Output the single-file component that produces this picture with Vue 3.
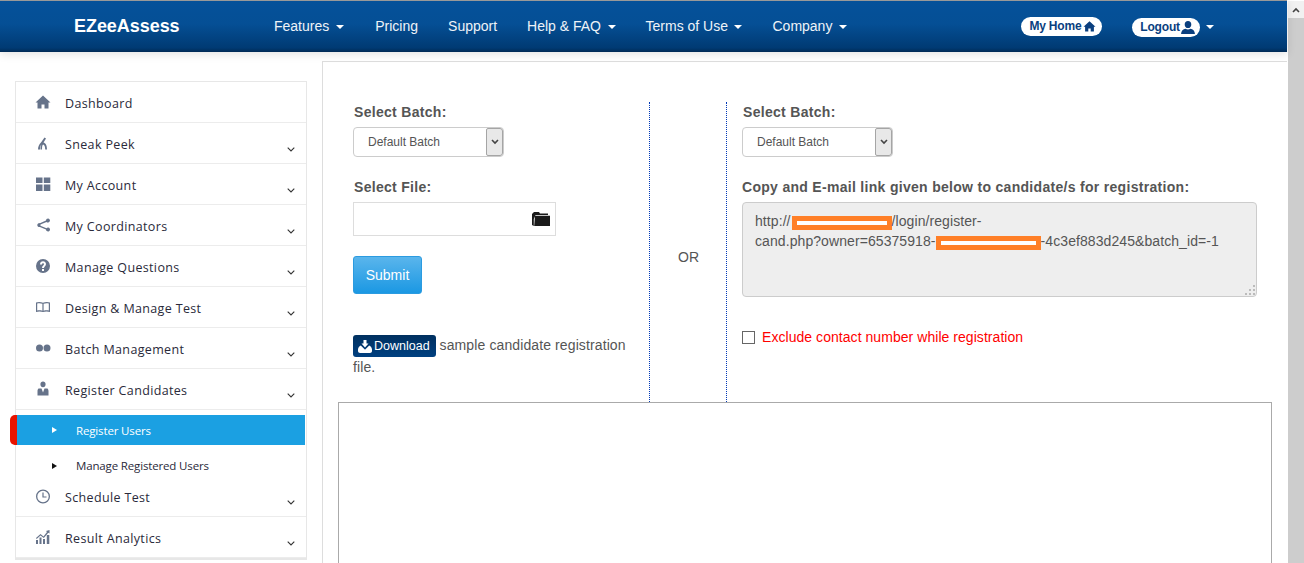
<template>
  <div class="page">
    <div class="main">
      <header class="topbar">
        <a class="brand">EZeeAssess</a>
        <nav class="nav">
          <a v-for="link in navLinks" :key="link.label" class="nav-link">
            {{ link.label }}<span v-if="link.caret" class="caret"></span>
          </a>
        </nav>
        <div class="user-links">
          <a class="pill">
            My Home
            <svg width="13" height="12" viewBox="0 0 16 15"><path :d="icons.home" /></svg>
          </a>
          <a class="pill logout">
            Logout
            <svg width="14" height="13" viewBox="0 0 16 15"><path d="M8 0c2.400 0 3.800 1.700 3.800 3.900S10.400 8.200 8 8.200 4.200 6.100 4.200 3.900 5.600 0 8 0zM0 15c0-3.600 2.400-5.500 5.200-6 .8.500 1.700.8 2.800.8s2-.3 2.800-.8c2.800.5 5.200 2.400 5.200 6z" /></svg>
          </a>
          <span class="caret user-caret"></span>
        </div>
      </header>

      <div class="layout">
        <aside class="sidebar">
          <template v-for="item in menu" :key="item.label">
            <div class="menu-row">
              <svg class="menu-icon" width="16" height="16" viewBox="0 0 16 16"><path fill-rule="evenodd" :d="icons[item.icon]" /></svg>
              <span>{{ item.label }}</span>
              <svg v-if="item.arrow" class="chevron" width="8" height="5" viewBox="0 0 8 5"><path d="M.7.700 4 4l3.300-3.300" /></svg>
            </div>
            <div v-if="item.sub" class="submenu">
              <div
                v-for="sub in item.sub"
                :key="sub.label"
                class="sub-row"
                :class="{ active: sub.active }"
              >
                <span class="tri"></span>{{ sub.label }}
              </div>
            </div>
          </template>
        </aside>

        <section class="panel">
          <div class="forms">
            <div class="col-left">
              <label class="field-label nudge">Select Batch:</label>
              <div class="select-box">
                <span>Default Batch</span>
                <span class="select-arrow">
                  <svg width="8" height="6" viewBox="0 0 8 6"><path d="M1 1l3 3 3-3" /></svg>
                </span>
              </div>
              <label class="field-label file-label nudge">Select File:</label>
              <div class="file-box">
                <svg width="18" height="14" viewBox="0 0 18 14"><path d="M2 0h5l1 1.500h8V3H3.500L1.800 7V14L0 13V2zM3 3.800h15V14H2.200z" /></svg>
              </div>
              <button class="submit">Submit</button>
              <p class="sample">
                <a class="download">
                  <svg width="14" height="13" viewBox="0 0 14 13"><path d="M5.500 0h3v3.500h2L7 7.500 3.500 3.500h2zM2.800 5.500 6.800 9.500 7.200 9.500 11.200 5.500C13 6.500 14 8 14 9.500V11c0 1-1 2-2 2H2c-1 0-2-1-2-2V9.500C0 8 1 6.500 2.800 5.500z" /></svg>
                  <span>Download</span>
                </a>
                <span> sample candidate registration file.</span>
              </p>
            </div>

            <div class="col-or">OR</div>

            <div class="col-right">
              <label class="field-label nudge">Select Batch:</label>
              <div class="select-box">
                <span>Default Batch</span>
                <span class="select-arrow">
                  <svg width="8" height="6" viewBox="0 0 8 6"><path d="M1 1l3 3 3-3" /></svg>
                </span>
              </div>
              <label class="field-label link-label">Copy and E-mail link given below to candidate/s for registration:</label>
              <div class="link-box">
                http://<span class="redact first"></span>/login/register-<br />cand.php?owner=65375918-<span class="redact second"></span>-4c3ef883d245&amp;batch_id=-1
                <svg class="grip" width="12" height="12" viewBox="0 0 12 12"><path d="M9 1h2v2H9zM5 5h2v2H5zM9 5h2v2H9zM1 9h2v2H1zM5 9h2v2H5zM9 9h2v2H9z" /></svg>
              </div>
              <div class="exclude">
                <span class="check"></span>
                <span>Exclude contact number while registration</span>
              </div>
            </div>
          </div>
          <div class="result-box"></div>
        </section>
      </div>
    </div>

    <div class="scrollbar">
      <div class="scroll-btn">
        <svg width="8" height="6" viewBox="0 0 8 6"><path d="M1 5l3-3 3 3" /></svg>
      </div>
    </div>
  </div>
</template>

<script setup>
const navLinks = [
  { label: 'Features', caret: true },
  { label: 'Pricing' },
  { label: 'Support' },
  { label: 'Help & FAQ', caret: true },
  { label: 'Terms of Use', caret: true },
  { label: 'Company', caret: true }
]

const menu = [
  { label: 'Dashboard', icon: 'home' },
  { label: 'Sneak Peek', icon: 'peek', arrow: true },
  { label: 'My Account', icon: 'grid', arrow: true },
  { label: 'My Coordinators', icon: 'share', arrow: true },
  { label: 'Manage Questions', icon: 'question', arrow: true },
  { label: 'Design & Manage Test', icon: 'book', arrow: true },
  { label: 'Batch Management', icon: 'dots', arrow: true },
  {
    label: 'Register Candidates',
    icon: 'person',
    arrow: true,
    sub: [{ label: 'Register Users', active: true }, { label: 'Manage Registered Users' }]
  },
  { label: 'Schedule Test', icon: 'clock', arrow: true },
  { label: 'Result Analytics', icon: 'chart', arrow: true }
]

// 16x16 paths, drawn with evenodd so rings and cut-outs work
const icons = {
  home: 'M8 1.500 15.500 8.500H13.500V14.500H9.500V10.500H6.500V14.500H2.500V8.500H.5Z',
  peek: 'M9.500 2.500 11 3.500 8.500 7.500C10.500 8 12 10 12 14.500H10.200C10.200 11.500 9.500 9.800 8 9.500 7 10.500 7 13 7 14.500H5.500C5.500 12.500 5.800 10.800 6.500 9.500 5.500 10 5 12 5 14.500H3C3 11.500 4 9.500 6 7.500Z',
  grid: 'M1 1.500H7.500V7H1ZM8.800 1.500H15.300V7H8.800ZM1 8.500H7.500V15H1ZM8.800 8.500H15.300V15H8.800Z',
  share: 'M13 1.500a2 2 0 1 1-1.500 3.400L5.400 7.500a2 2 0 0 1 0 1.200l6.100 2.500A2 2 0 1 1 11 12.500L4.900 10A2 2 0 1 1 4.900 6.200L11 3.600A2 2 0 0 1 13 1.500Z',
  question: 'M8 1a7 7 0 1 1 0 14A7 7 0 0 1 8 1ZM7 11v2h2v-2ZM5 6.500h2c0-.8.400-1.200 1-1.200s1 .4 1 1c0 1-2 1.500-2 3.700h2c0-1.500 2-1.900 2-3.900C11 4.400 9.700 3.300 8 3.300S5 4.500 5 6.500Z',
  book: 'M1 3.500C3 2.800 6 2.800 8 3.800 10 2.800 13 2.800 15 3.500V13C13 12.300 10 12.300 8 13 6 12.300 3 12.300 1 13ZM2.200 4.500V11.500C4 11.200 5.800 11.300 7.400 11.800V4.800C5.800 4.100 4 4.100 2.200 4.500ZM8.600 4.800V11.800C10.200 11.300 12 11.200 13.800 11.500V4.500C12 4.100 10.200 4.100 8.600 4.800Z',
  dots: 'M4.500 4.500a3.500 3.500 0 1 1 0 7 3.500 3.500 0 0 1 0-7ZM12 4.500a3.500 3.500 0 1 1 0 7 3.500 3.500 0 0 1 0-7Z',
  person: 'M8 .5c1.500 0 2.600 1.100 2.600 2.700S9.500 6.300 8 6.300 5.400 4.800 5.400 3.200 6.500 .5 8 .5ZM3.500 7.500H6.500L8 11.500 9.500 7.500H12.500C13 8 13.500 9 13.500 10V14.500H2.500V10C2.500 9 3 8 3.500 7.500Z',
  clock: 'M8 1.500a7 7 0 1 1 0 14 7 7 0 0 1 0-14ZM8 2.800a5.700 5.700 0 1 0 0 11.400A5.700 5.700 0 0 0 8 2.800ZM7.400 4.500H8.600V8.400H11.500V9.600H7.400Z',
  chart: 'M1 11h2v4H1ZM4.500 8.500h2V15h-2ZM8 10h2v5H8ZM11.800 6h2.500v9h-2.500ZM1 9 5.500 5 8.500 7.500 12 3 11 2 14.500 1 14.500 4.500 13.300 3.700 8.800 9 5.500 6.500 1.700 10Z'
}
</script>

<style scoped>
.page {
  display: flex;
  height: 563px;
  overflow: hidden;
  font-family: "Liberation Sans", Arial, sans-serif;
  font-size: 14px;
  color: #555;
  background: #fff;
}

.main {
  width: 1287px;
  flex: none;
}

.topbar {
  display: flex;
  align-items: center;
  height: 51px;
  border-top: 1px solid #999;
  background: linear-gradient(to bottom, #05519a 0%, #054f95 45%, #003a73 92%, #002a55 100%);
  box-shadow: 0 2px 9px rgba(0, 0, 0, 0.12);
  color: #fff;
  position: relative;
}

.brand {
  margin-left: 74px;
  width: 185px;
  font-size: 18px;
  font-weight: bold;
  letter-spacing: -0.05px;
}

.nav {
  display: flex;
  margin-top: -2px;
}

.nav-link {
  padding: 0 15px;
  color: #eef3f8;
  white-space: nowrap;
  line-height: 48px;
}

.nav-link:first-child {
  padding-right: 16.500px;
}

.caret {
  display: inline-block;
  margin-left: 6.500px;
  vertical-align: middle;
  border-top: 4px solid #fff;
  border-left: 4px solid transparent;
  border-right: 4px solid transparent;
}

.user-links {
  display: flex;
  align-items: center;
  margin-left: 159.500px;
  font-size: 12px;
  font-weight: bold;
  letter-spacing: -0.2px;
}

.pill {
  display: flex;
  align-items: center;
  gap: 2px;
  height: 19px;
  padding: 0 6px 0 8px;
  margin-top: -1px;
  border-radius: 10px;
  background: #fff;
  color: #0a3f7f;
}

.pill svg {
  fill: #0a3f7f;
}

.logout {
  gap: 1px;
  margin-left: 30px;
  margin-top: 1px;
  padding-right: 5px;
}

.user-caret {
  margin-left: 6px;
  margin-top: 1px;
}

.layout {
  display: flex;
  align-items: flex-start;
  padding-top: 9px;
}

.sidebar {
  flex: none;
  width: 292px;
  box-sizing: border-box;
  margin: 20px 15px 0 15px;
  border: 1px solid #e7e7e7;
  border-bottom-width: 2px;
  font-family: "Open Sans", sans-serif;
  font-size: 12.5px;
  letter-spacing: 0.35px;
  color: #2a2a3a;
}

.menu-row {
  position: relative;
  display: flex;
  align-items: center;
  height: 38px;
  padding: 2px 0 0 49px;
  border-bottom: 1px solid #ececec;
}

.menu-icon {
  position: absolute;
  left: 19px;
  top: 12px;
  fill: #66738a;
}

.chevron {
  position: absolute;
  right: 11px;
  top: 24px;
  fill: none;
  stroke: #333;
  stroke-width: 1.100;
}

.submenu {
  padding-top: 5px;
  font-size: 11.500px;
  letter-spacing: -0.15px;
}

.sub-row {
  display: flex;
  align-items: center;
  height: 21px;
  padding: 10px 0 0 36px;
}

.sub-row.active {
  height: 30px;
  padding-top: 0;
  margin-left: -6px;
  padding-left: 35px;
  background: #1ba0e2;
  border-left: 7px solid #e81400;
  border-radius: 5px 0 0 5px;
  color: #fff;
  width: 295px;
  box-sizing: border-box;
}

.tri {
  width: 0;
  height: 0;
  margin-right: 19px;
  border-left: 5px solid #111;
  border-top: 3px solid transparent;
  border-bottom: 3px solid transparent;
}

.active .tri {
  border-left-color: #fff;
}

.panel {
  flex: 1;
  min-width: 0;
  height: 600px;
  padding: 40px 15px 0 15px;
  border-top: 1px solid #ddd;
  border-left: 1px solid #ddd;
}

.forms {
  display: flex;
  height: 300px;
}

.col-left {
  flex: none;
  width: 312px;
  box-sizing: border-box;
  padding-left: 15px;
  border-right: 1px dotted #0038b8;
}

.col-or {
  flex: none;
  width: 77px;
  box-sizing: border-box;
  padding: 147px 0 0 28px;
  border-right: 1px dotted #0038b8;
}

.col-right {
  flex: 1;
  min-width: 0;
  padding: 0 15px;
}

.field-label {
  display: block;
  font-weight: bold;
  line-height: 20px;
  letter-spacing: 0.3px;
}

.nudge {
  margin-left: 1px;
}

.select-box {
  display: flex;
  align-items: center;
  justify-content: space-between;
  width: 151px;
  height: 30px;
  box-sizing: border-box;
  margin-top: 5px;
  padding-left: 14px;
  border: 1px solid #ccc;
  border-radius: 4px;
  font-size: 12px;
}

.select-arrow {
  display: flex;
  align-items: center;
  justify-content: center;
  width: 17px;
  height: 28px;
  box-sizing: border-box;
  border: 1px solid #a5a5a5;
  border-radius: 2px 3px 3px 2px;
  background: #e8e8e8;
}

.select-arrow svg,
.scroll-btn svg {
  fill: none;
  stroke: #444;
  stroke-width: 1.600;
}

.file-label {
  margin-top: 20px;
}

.file-box {
  display: flex;
  align-items: center;
  justify-content: flex-end;
  width: 203px;
  height: 34px;
  box-sizing: border-box;
  margin-top: 5px;
  padding-right: 5px;
  border: 1px solid #ddd;
}

.file-box svg {
  fill: #1a1a1a;
}

.submit {
  display: block;
  width: 69px;
  height: 38px;
  margin-top: 20px;
  padding: 0;
  border: 1px solid #2b9be0;
  border-radius: 3px;
  background: linear-gradient(to bottom, #5ab5ec, #1b98e3);
  color: #fff;
  font-family: inherit;
  font-size: 14px;
}

.sample {
  margin: 40px 0 0;
  line-height: 22px;
  letter-spacing: 0.11px;
}

.download {
  display: inline-flex;
  align-items: center;
  gap: 2px;
  height: 22px;
  margin: 1px 0 -1px;
  padding: 0 6px 0 5px;
  vertical-align: top;
  border-radius: 3px;
  background: linear-gradient(to bottom, #00305f, #004080);
  color: #fff;
  font-size: 12.500px;
  letter-spacing: 0;
}

.download svg {
  fill: #fff;
}

.link-label {
  margin-top: 20px;
}

.link-box {
  position: relative;
  height: 95px;
  box-sizing: border-box;
  margin-top: 5px;
  padding: 8px 12px;
  border: 1px solid #ccc;
  border-radius: 4px;
  background: #eee;
  line-height: 20px;
  letter-spacing: 0.08px;
}

.redact {
  display: inline-block;
  height: 4px;
  border: 5px solid #ff7f27;
  background: #fff;
  vertical-align: -4px;
}

.redact.first {
  width: 90px;
  margin-left: 1px;
}

.redact.second {
  width: 95px;
}

.grip {
  position: absolute;
  right: 0;
  bottom: 0;
  fill: #bbb;
}

.exclude {
  display: flex;
  align-items: center;
  gap: 7px;
  margin-top: 32px;
  color: #f00;
  letter-spacing: 0.05px;
}

.check {
  width: 13px;
  height: 13px;
  box-sizing: border-box;
  border: 1px solid #666;
}

.result-box {
  height: 300px;
  border: 1px solid #aaa;
}

.scrollbar {
  flex: none;
  width: 16px;
  margin: 1px 0 0 1px;
  background: #cdcdcd;
}

.scroll-btn {
  display: flex;
  align-items: center;
  justify-content: center;
  height: 17px;
  background: #f1f1f1;
}
</style>

<style>
body {
  margin: 0;
}
</style>
